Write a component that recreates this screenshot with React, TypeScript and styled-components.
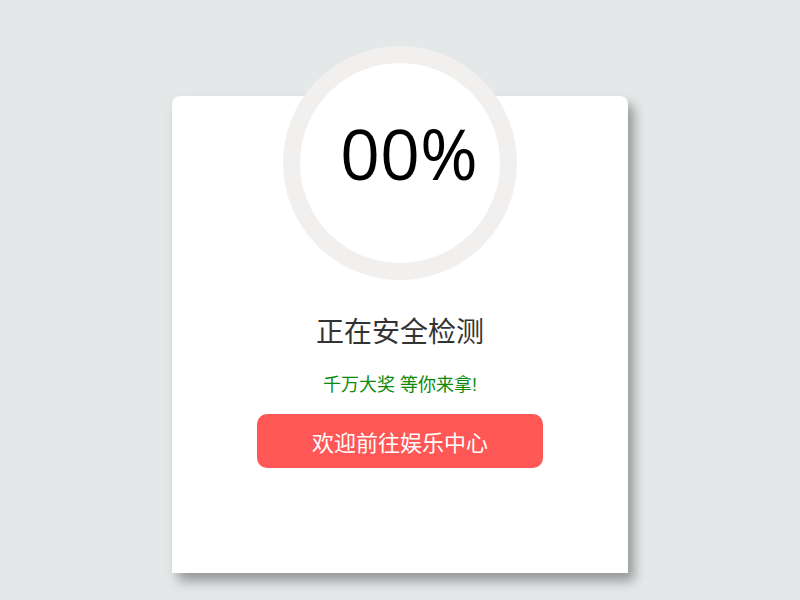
import React from "react";
import styled, { createGlobalStyle } from "styled-components";

const GlobalStyle = createGlobalStyle`
  html, body {
    margin: 0;
    padding: 0;
    height: 100%;
    background: #e4e8e9;
    font-family: "Liberation Sans", "Noto Sans CJK SC", sans-serif;
  }
`;

const StyledPage = styled.div`
  display: flex;
  justify-content: center;
  padding-top: 96px;
  height: 600px;
  box-sizing: border-box;
  overflow: hidden;
`;

const StyledCard = styled.div`
  width: 456px;
  height: 477px;
  background: #ffffff;
  border-radius: 8px 8px 0 0;
  box-shadow: 6px 8px 12px rgba(0, 0, 0, 0.35);
  display: flex;
  flex-direction: column;
  align-items: center;
`;

const StyledRing = styled.div`
  width: 234px;
  height: 234px;
  margin-top: -50px;
  box-sizing: border-box;
  border: 17px solid #f2f0ef;
  border-radius: 50%;
  background: #ffffff;
  display: flex;
  justify-content: center;
  padding-top: 55px;
  padding-left: 18px;
`;

const StyledPercent = styled.div`
  font-family: "Open Sans", sans-serif;
  font-size: 70px;
  line-height: 1;
  color: #000000;
`;

const StyledTitle = styled.div`
  margin-top: 36px;
  font-size: 28px;
  line-height: 34px;
  color: #333333;
`;

const StyledSubtitle = styled.div`
  margin-top: 24px;
  font-size: 18px;
  line-height: 22px;
  color: #0a8a0a;
`;

const StyledButton = styled.button`
  margin-top: 18px;
  width: 286px;
  height: 54px;
  border: none;
  border-radius: 10px;
  background: #ff5656;
  color: #ffffff;
  font-family: "Liberation Sans", "Noto Sans CJK SC", sans-serif;
  font-size: 22px;
  cursor: pointer;
`;

export default function App() {
  return (
    <>
      <GlobalStyle />
      <StyledPage>
        <StyledCard>
          <StyledRing>
            <StyledPercent>00%</StyledPercent>
          </StyledRing>
          <StyledTitle>正在安全检测</StyledTitle>
          <StyledSubtitle>千万大奖 等你来拿!</StyledSubtitle>
          <StyledButton type="button">欢迎前往娱乐中心</StyledButton>
        </StyledCard>
      </StyledPage>
    </>
  );
}
